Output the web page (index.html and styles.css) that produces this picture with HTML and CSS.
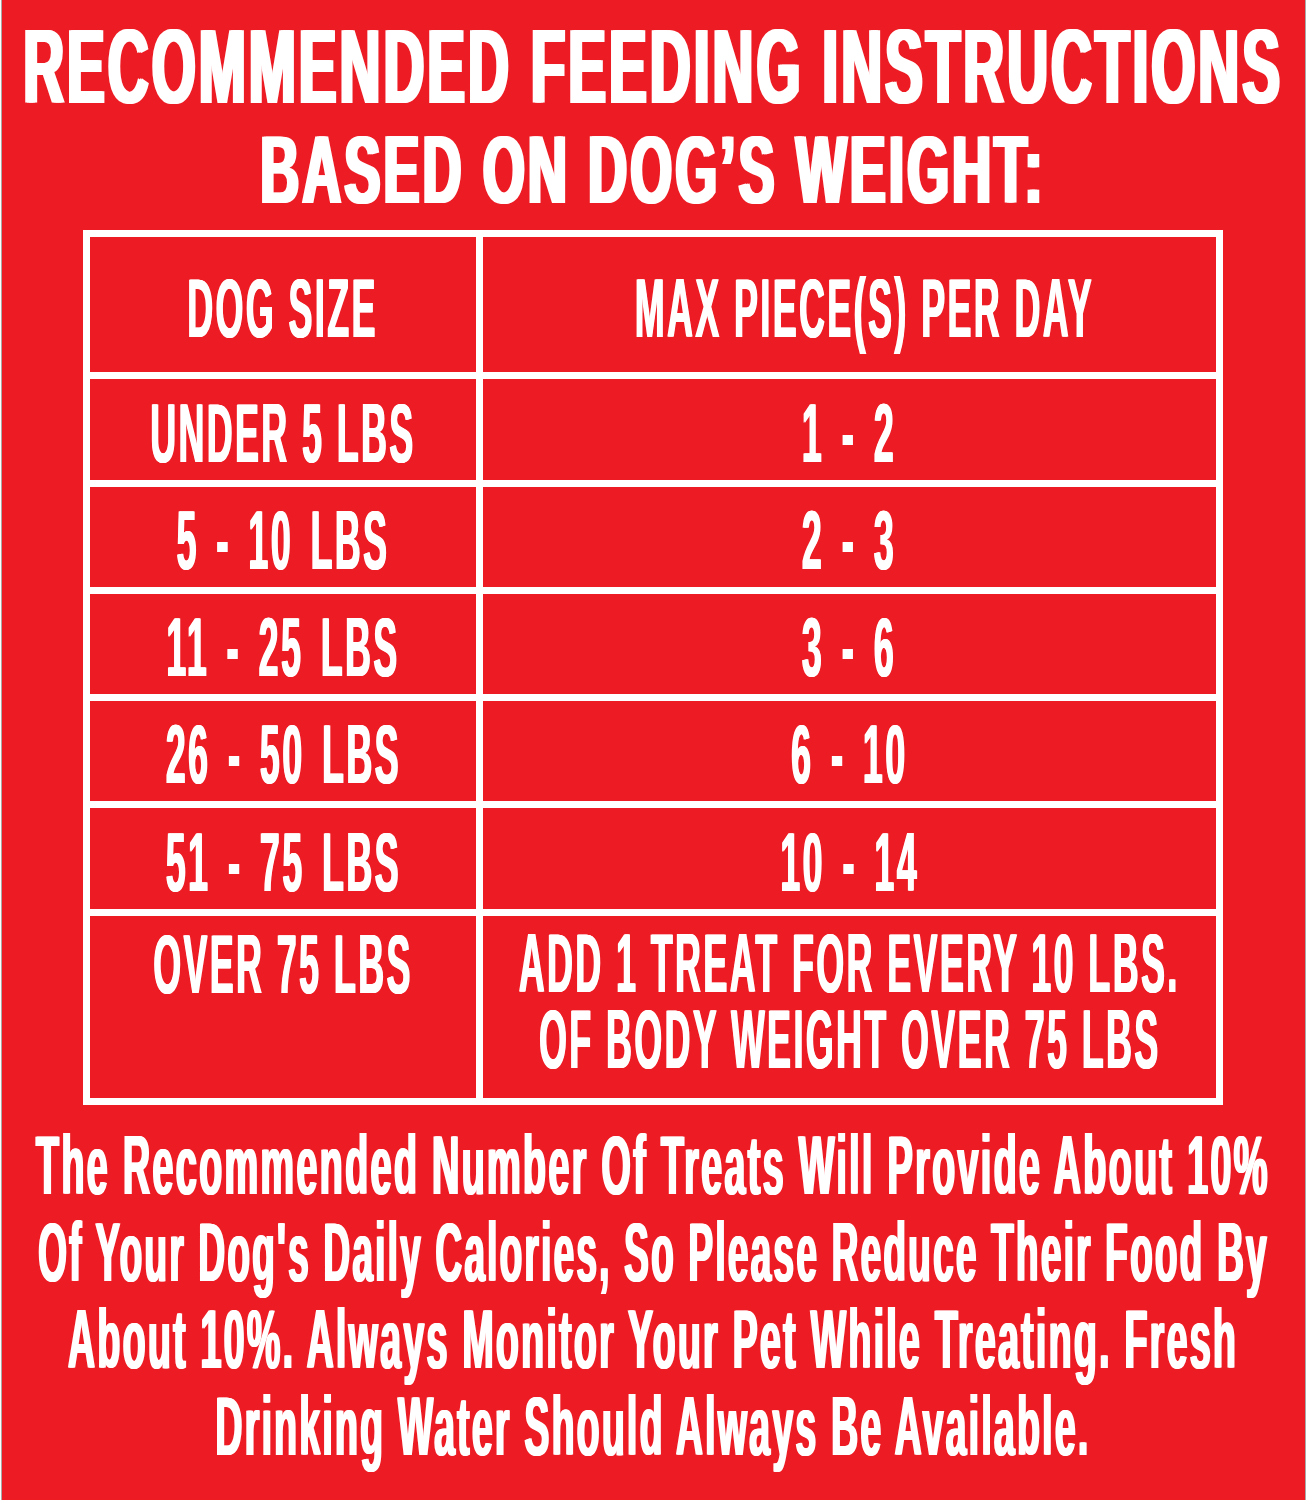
FILE: index.html
```html
<!DOCTYPE html>
<html lang="en">
<head>
<meta charset="utf-8">
<title>Recommended Feeding Instructions</title>
<link rel="stylesheet" href="styles.css">
</head>
<body>
<div class="page">
  <header class="title">
    <div class="ln t1"><span>RECOMMENDED FEEDING INSTRUCTIONS</span></div>
    <div class="ln t2"><span>BASED ON DOG’S WEIGHT:</span></div>
  </header>

  <div class="chart">
    <div class="cell head"><div class="ln"><span>DOG SIZE</span></div></div>
    <div class="cell head head-r"><div class="ln"><span>MAX PIECE(S) PER DAY</span></div></div>

    <div class="cell"><div class="ln"><span>UNDER 5 LBS</span></div></div>
    <div class="cell range"><div class="ln"><span>1 - 2</span></div></div>

    <div class="cell range"><div class="ln"><span>5 - 10 LBS</span></div></div>
    <div class="cell range"><div class="ln"><span>2 - 3</span></div></div>

    <div class="cell range"><div class="ln"><span>11 - 25 LBS</span></div></div>
    <div class="cell range"><div class="ln"><span>3 - 6</span></div></div>

    <div class="cell range"><div class="ln"><span>26 - 50 LBS</span></div></div>
    <div class="cell range"><div class="ln"><span>6 - 10</span></div></div>

    <div class="cell range"><div class="ln"><span>51 - 75 LBS</span></div></div>
    <div class="cell range"><div class="ln"><span>10 - 14</span></div></div>

    <div class="cell top"><div class="ln"><span>OVER 75 LBS</span></div></div>
    <div class="cell top multi">
      <div class="ln"><span>ADD 1 TREAT FOR EVERY 10 LBS.</span></div>
      <div class="ln"><span>OF BODY WEIGHT OVER 75 LBS</span></div>
    </div>
  </div>

  <div class="note">
    <div class="ln l1"><span>The Recommended Number Of Treats Will Provide About 10%</span></div>
    <div class="ln l2"><span>Of Your Dog's Daily Calories, So Please Reduce Their Food By</span></div>
    <div class="ln l3"><span>About 10%. Always Monitor Your Pet While Treating. Fresh</span></div>
    <div class="ln l4"><span>Drinking Water Should Always Be Available.</span></div>
  </div>
</div>
</body>
</html>
```

FILE: styles.css
```css
html, body {
  margin: 0;
  padding: 0;
  background: #ffffff;
}

.page {
  box-sizing: border-box;
  width: 1305px;
  height: 1500px;
  margin-left: 1px;
  padding-right: 1px;
  border-left: 1px solid #a9a9a9;
  border-right: 1px solid #a9a9a9;
  background: #ed1c24;
  color: #ffffff;
  font-family: "Liberation Sans", Arial, sans-serif;
  font-weight: 700;
  overflow: hidden;
}

/* one line of condensed text: the span is narrowed around the line's centre */
.ln {
  display: flex;
  justify-content: center;
}

.ln span {
  flex: none;
  white-space: nowrap;
  transform-origin: 50% 50%;
}

/* ---------- title ---------- */
.title {
  padding-top: 16px;
}

.t1 {
  font-size: 105px;
  line-height: 102px;
  letter-spacing: 6px;
}

.t1 span {
  transform: scaleX(0.536);
  text-shadow: 3.5px 0 0 #fff, -3.5px 0 0 #fff;
}

.t2 {
  margin-top: 2px;
  font-size: 97px;
  line-height: 100px;
  letter-spacing: 6px;
}

.t2 span {
  transform: scaleX(0.553);
  text-shadow: 3.5px 0 0 #fff, -3.5px 0 0 #fff;
}

/* ---------- chart ---------- */
.chart {
  display: grid;
  grid-template-columns: 386px 733px;
  grid-template-rows: 135px 101px 100px 100px 100px 101px 182px;
  gap: 7px;
  width: 1140px;
  box-sizing: border-box;
  padding: 7px;
  margin: 10px auto 0;
  background: #ffffff;
}

.cell {
  display: flex;
  flex-direction: column;
  justify-content: center;
  padding-top: 6px;
  box-sizing: border-box;
  background: #ed1c24;
  font-size: 84px;
  line-height: 84px;
  letter-spacing: 6px;
}

.cell span {
  transform: scaleX(0.424);
  text-shadow: 1.5px 0 0 #fff, -1.5px 0 0 #fff;
}

.cell.head-r {
  padding-left: 30px;
}

.cell.range {
  word-spacing: 12px;
}

.cell.top {
  justify-content: flex-start;
}

.cell.multi {
  padding-top: 9px;
  line-height: 76px;
}

/* ---------- note ---------- */
.note {
  margin-top: 17px;
  font-size: 84px;
  line-height: 87px;
  letter-spacing: 5px;
}

.note span {
  text-shadow: 2px 0 0 #fff, -2px 0 0 #fff;
}

.note .l1 span { transform: scaleX(0.451); }
.note .l2 span { transform: scaleX(0.441); }
.note .l3 span { transform: scaleX(0.448); }
.note .l4 span { transform: scaleX(0.446); }
```
